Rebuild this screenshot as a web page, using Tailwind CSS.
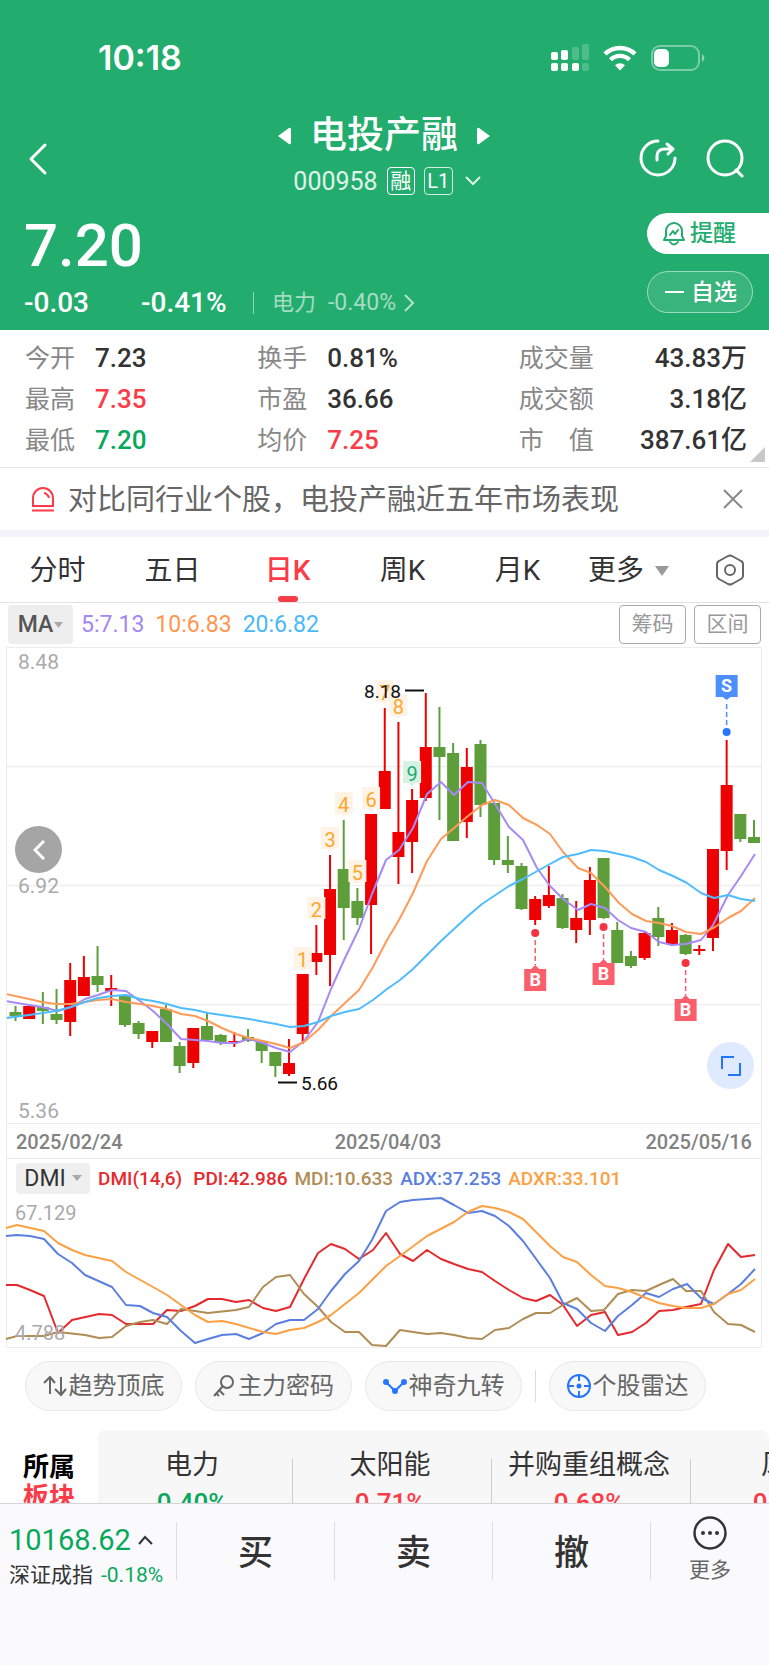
<!DOCTYPE html>
<html lang="zh-CN">
<head>
<meta charset="utf-8">
<meta name="viewport" content="width=device-width, initial-scale=1">
<title>电投产融 000958</title>
<script src="https://cdn.jsdelivr.net/npm/@tailwindcss/browser@4"></script>
</head>
<body class="bg-white font-['Roboto','Noto_Sans_CJK_SC',sans-serif] text-[#333]">
<div class="flex h-screen flex-col">

<header class="h-[330px] shrink-0 bg-[#22ac6e] text-white">
  <div class="flex h-[114px] items-center justify-between pl-[98px] pr-[64px] pt-px">
    <span class="font-['Inter',sans-serif] text-[34px] font-semibold leading-none">10:18</span>
    <div class="flex items-center gap-[14px]">
      <svg class="h-[28px] w-[38px]" viewBox="0 0 38 28" fill="#fff" aria-label="信号">
        <rect x="0" y="8" width="7" height="8" rx="2"/><rect x="10" y="6" width="7" height="10" rx="2"/>
        <rect x="21" y="3" width="7" height="13" rx="2" opacity=".2"/><rect x="31" y="0" width="7" height="16" rx="2" opacity=".2"/>
        <rect x="0" y="19" width="7" height="8" rx="2"/><rect x="10" y="19" width="7" height="8" rx="2"/><rect x="21" y="19" width="7" height="8" rx="2"/><rect x="31" y="19" width="7" height="8" rx="2" opacity=".2"/>
      </svg>
      <svg class="h-[26px] w-[34px]" viewBox="0 0 34 26" fill="none" stroke="#fff" aria-label="无线网络">
        <path d="M2 9A21.500 21.500 0 0 1 32 9" stroke-width="4.500"/><path d="M7.500 14.800A13.500 13.500 0 0 1 26.500 14.800" stroke-width="4.300"/>
        <path d="M17 25.500l-5-5.200a7.200 7.200 0 0 1 10 0z" fill="#fff" stroke="none"/>
      </svg>
      <svg class="h-[26px] w-[54px]" viewBox="0 0 54 26" aria-label="电池">
        <rect x="1" y="1" width="47" height="24" rx="8" fill="none" stroke="#fff" stroke-opacity=".4" stroke-width="2"/>
        <rect x="3" y="4" width="15" height="18" rx="5" fill="#fff"/><path d="M51 9q5 4 0 8z" fill="#fff" opacity=".5"/>
      </svg>
    </div>
  </div>

  <div class="flex h-[89px] justify-between pl-[24px] pr-[25px]">
    <button class="mt-[28px] h-[34px] w-[106px]" aria-label="返回">
      <svg class="h-[34px] w-[24px]" viewBox="0 0 24 34" fill="none" stroke="#fff" stroke-width="3" stroke-linecap="round" stroke-linejoin="round"><path d="M21 3L7 17l14 14"/></svg>
    </button>
    <div class="flex flex-col items-center">
      <div class="flex h-[44px] items-center gap-[19px]">
        <button aria-label="上一只"><svg class="h-[18px] w-[13px]" viewBox="0 0 13 18" fill="#fff"><path d="M0 9L11 1q2-1 2 1v14q0 2-2 1z"/></svg></button>
        <h1 class="text-[37px] font-medium leading-[44px]">电投产融</h1>
        <button aria-label="下一只"><svg class="h-[18px] w-[13px]" viewBox="0 0 13 18" fill="#fff"><path d="M13 9L2 1Q0 0 0 2v14q0 2 2 1z"/></svg></button>
      </div>
      <div class="mt-[8px] flex h-[30px] items-center gap-[9px] pl-[6px]">
        <span class="text-[25px] leading-none text-white/85">000958</span>
        <span class="flex h-[28px] w-[28px] items-center justify-center rounded-[4px] border border-white text-[21px] leading-none">融</span>
        <span class="flex h-[28px] w-[29px] items-center justify-center rounded-[4px] border border-white/80 text-[20px] leading-none">L1</span>
        <svg class="ml-[3px] h-[10px] w-[16px]" viewBox="0 0 16 10" fill="none" stroke="#fff" stroke-width="2" opacity=".85"><path d="M1 1l7 7 7-7"/></svg>
      </div>
    </div>
    <div class="mt-[24px] flex h-[40px] items-center gap-[28px]">
      <button aria-label="分享"><svg class="h-[40px] w-[40px]" viewBox="0 0 40 40" fill="none" stroke="#fff" stroke-width="3" stroke-linecap="round" stroke-linejoin="round"><path d="M20 3A17 17 0 1 0 37 20"/><path d="M19 22v-4q0-7 8-7h8M29 6l6 5-5 5"/></svg></button>
      <button aria-label="搜索"><svg class="h-[40px] w-[38px]" viewBox="0 0 38 40" fill="none" stroke="#fff" stroke-width="3" stroke-linecap="round"><circle cx="19" cy="20" r="17"/><path d="M30 32l6 6"/></svg></button>
    </div>
  </div>

  <div class="flex justify-between pl-[24px]">
    <div>
      <div class="mt-[10px] h-[66px] text-[60px] font-medium leading-[66px]">7.20</div>
      <div class="mt-[8px] flex h-[32px] items-center text-[28px] leading-[32px]">
        <span class="w-[117px] font-medium">-0.03</span>
        <span class="w-[112px] font-medium">-0.41%</span>
        <a href="#" class="flex items-center gap-[12px] border-l border-white/50 pl-[18px] text-[22px] leading-[22px] text-white/60"><span>电力</span><span class="text-[23px]">-0.40%</span>
          <svg class="-ml-[4px] h-[18px] w-[11px]" viewBox="0 0 11 18" fill="none" stroke="#fff" stroke-width="2" opacity=".65"><path d="M1 1l8 8-8 8"/></svg></a>
      </div>
    </div>
    <div class="mt-[10px] flex flex-col items-start gap-[17px]">
      <button class="flex h-[41px] w-[122px] items-center gap-[5px] rounded-l-full bg-white pl-[16px] text-[23px] font-medium leading-none text-[#22ac6e]">
        <svg class="h-[24px] w-[22px]" viewBox="0 0 22 24" fill="none" stroke="#22ac6e" stroke-width="2" stroke-linejoin="round" stroke-linecap="round"><path d="M1 18h20l-2-4V9a8 8 0 0 0-16 0v5zM7 20q4 5 8 0M7 13l3-4 2 3 3-4"/></svg>提醒</button>
      <button class="flex h-[42px] w-[106px] items-center gap-[7px] rounded-full border border-white/50 bg-white/10 pl-[17px] text-[23px] font-medium leading-none">
        <span class="h-[2px] w-[19px] bg-white"></span>自选</button>
    </div>
  </div>
</header>

<main class="min-h-0 flex-1 overflow-hidden">
  <section class="relative grid h-[138px] grid-cols-[232fr_261fr_228fr] border-b border-[#e8e8e8] pl-[25px] pr-[22px] pt-[8px] text-[26px] font-medium leading-[41px]">
    <dl class="grid grid-cols-[70px_1fr] content-start">
      <dt class="text-[25px] font-normal text-[#888]">今开</dt><dd>7.23</dd>
      <dt class="text-[25px] font-normal text-[#888]">最高</dt><dd class="text-[#fb3b47]">7.35</dd>
      <dt class="text-[25px] font-normal text-[#888]">最低</dt><dd class="text-[#08a85c]">7.20</dd>
    </dl>
    <dl class="grid grid-cols-[70px_1fr] content-start">
      <dt class="text-[25px] font-normal text-[#888]">换手</dt><dd>0.81%</dd>
      <dt class="text-[25px] font-normal text-[#888]">市盈</dt><dd>36.66</dd>
      <dt class="text-[25px] font-normal text-[#888]">均价</dt><dd class="text-[#fb3b47]">7.25</dd>
    </dl>
    <dl class="grid grid-cols-[75px_1fr] content-start">
      <dt class="text-[25px] font-normal text-[#888]">成交量</dt><dd class="text-right">43.83万</dd>
      <dt class="text-[25px] font-normal text-[#888]">成交额</dt><dd class="text-right">3.18亿</dd>
      <dt class="flex justify-between text-[25px] font-normal text-[#888]"><span>市</span><span>值</span></dt><dd class="text-right">387.61亿</dd>
    </dl>
    <svg class="absolute bottom-[5px] right-[4px] h-[15px] w-[15px]" viewBox="0 0 15 15" fill="#c8c8c8"><path d="M15 0v15H0z"/></svg>
  </section>

  <section class="flex h-[62px] items-center pl-[31px] pr-[26px]">
    <svg class="h-[25px] w-[24px]" viewBox="0 0 24 25" fill="none" stroke="#fb3b47" stroke-width="2"><path d="M2 19V11a10 10 0 0 1 20 0v8zM1 23.500h22M13 6q4 1 5 5"/></svg>
    <a href="#" class="ml-[13px] flex-1 whitespace-nowrap pt-[2px] text-[29px] leading-[40px] text-[#666]">对比同行业个股，电投产融近五年市场表现</a>
    <button aria-label="关闭"><svg class="h-[20px] w-[20px]" viewBox="0 0 20 20" fill="none" stroke="#888" stroke-width="2"><path d="M1 1l18 18M19 1L1 19"/></svg></button>
  </section>
  <div class="h-[7px] bg-[#f3f4f9]"></div>

  <nav class="flex h-[66px] items-stretch border-b border-[#e2e2e4] text-[28px] leading-[40px]">
    <button class="flex-1 pt-[2px]">分时</button>
    <button class="flex-1 pt-[2px]">五日</button>
    <button class="relative flex-1 pt-[2px] font-medium text-[#fb3b47]">日K<span class="absolute bottom-0 left-1/2 h-[6px] w-[20px] -translate-x-1/2 rounded-[3px] bg-[#fb3b47]"></span></button>
    <button class="flex-1 pt-[2px]">周K</button>
    <button class="flex-1 pt-[2px]">月K</button>
    <button class="flex flex-1 items-center justify-center pt-[2px]"><span class="flex items-center gap-[11px] pr-[8px]">更多<svg class="h-[10px] w-[14px]" viewBox="0 0 14 10" fill="#999"><path d="M0 0h14L7 10z"/></svg></span></button>
    <button class="flex w-[79px] items-center justify-center" aria-label="设置"><svg class="h-[32px] w-[30px]" viewBox="0 0 30 32" fill="none" stroke="#666" stroke-width="2" stroke-linejoin="round"><path d="M13 2q2-1 4 0l9 5q2 1 2 3v12q0 2-2 3l-9 5q-2 1-4 0l-9-5q-2-1-2-3V10q0-2 2-3z"/><circle cx="15" cy="16" r="5"/></svg></button>
  </nav>

  <div class="flex h-[44px] items-start justify-between pl-[8px] pr-[8px] pt-[2px]">
    <div class="flex h-[39px] items-center gap-[11px] text-[23px] leading-none">
      <button class="-mr-[3px] flex h-[39px] w-[65px] items-center justify-center gap-[1px] rounded-[4px] bg-[#eee] text-[23px] font-medium text-[#555]">MA<svg class="h-[6px] w-[9px]" viewBox="0 0 9 6" fill="#aaa"><path d="M0 0h9L4.500 6z"/></svg></button>
      <span class="text-[#a586f2]">5:7.13</span><span class="text-[#ff9650]">10:6.83</span><span class="text-[#48b8fb]">20:6.82</span>
    </div>
    <div class="flex gap-[8px] text-[21px] leading-none text-[#999]">
      <button class="h-[39px] w-[67px] rounded-[4px] border border-[#aaa]">筹码</button>
      <button class="h-[39px] w-[67px] rounded-[4px] border border-[#aaa]">区间</button>
    </div>
  </div>

  <section class="ml-[6px] mr-[7px] border border-[#ececec]">
    <div class="relative border-b border-[#ececec]">
      <svg id="kline" class="block w-full" viewBox="7 648 754 475" fill="none" role="img" aria-label="日K线图">
        <path d="M7 766.500H761M7 885.500H761M7 1004.500H761" stroke="#efefef" stroke-width="1.500"/>
        <g id="candles"></g>
        <g id="counts" font-size="20" text-anchor="middle"></g>
        <g stroke-width="2" stroke-linejoin="round">
          <polyline stroke="#a68af5" points="6,1001 29,1005 42,1007 58,1011 71,1007 85,999 98,995 112,990 126,991 140,1001 153,1011 167,1024 181,1039 195,1040 208,1041 222,1043 236,1043 249,1039 263,1043 276,1048 290,1052 304,1041 318,1022 331,989 345,958 359,929 372,894 386,860 399,850 413,828 427,794 441,782 454,795 468,782 482,783 495,804 509,827 523,840 537,868 550,886 563,899 578,910 591,904 605,908 618,920 631,928 646,932 659,942 672,945 686,944 701,940 713,925 728,895 741,876 755,854"/>
          <polyline stroke="#ff9b58" points="6,994 29,999 42,1002 56,1004 71,1004 85,1002 98,1000 112,999 126,1002 140,1004 153,1006 167,1009 181,1014 195,1016 208,1021 222,1028 236,1034 249,1038 263,1041 276,1044 290,1048 304,1042 318,1030 331,1016 345,1003 359,990 373,967 387,940 399,920 413,893 427,861 441,839 454,828 468,816 482,805 495,800 509,805 523,818 537,825 550,834 563,852 578,868 591,873 605,887 619,903 632,914 646,921 659,923 672,926 686,932 701,934 715,927 728,918 741,911 755,898"/>
          <polyline stroke="#4fbcff" points="6,1018 29,1015 56,1011 71,1007 85,1002 98,998 112,996 126,995 140,999 153,1001 167,1004 181,1008 195,1010 208,1013 249,1019 276,1024 290,1027 304,1026 318,1022 331,1016 345,1012 359,1009 373,1000 387,989 400,980 413,969 441,941 454,929 468,916 482,904 509,886 523,879 550,864 563,857 578,854 591,850 605,851 632,857 646,862 659,870 673,876 687,883 701,893 714,898 728,895 741,899 755,901"/>
        </g>
        <g font-size="21" fill="#aaa"><text x="18" y="669">8.48</text><text x="18" y="893">6.92</text><text x="18" y="1118">5.36</text></g>
        <g font-size="19" fill="#111"><text x="364" y="698">8.18</text><text x="301" y="1090">5.66</text></g>
        <path d="M405 690.500h19M278 1082.500h19" stroke="#111" stroke-width="2"/>
        <g id="trades" font-size="18" font-weight="700" text-anchor="middle"></g>
      </svg>
      <button class="absolute left-[8px] top-[178px] flex h-[47px] w-[47px] items-center justify-center rounded-full bg-[#a5a5a5]" aria-label="向左"><svg class="h-[20px] w-[12px]" viewBox="0 0 12 20" fill="none" stroke="#fff" stroke-width="3"><path d="M11 1L2 10l9 9"/></svg></button>
      <button class="absolute bottom-[34px] right-[7px] flex h-[47px] w-[47px] items-center justify-center rounded-full bg-[#dfeafe]" aria-label="全屏"><svg class="h-[22px] w-[22px]" viewBox="0 0 22 22" fill="none" stroke="#2575ff" stroke-width="2"><path d="M14 2H2v12M20 8v12H8"/></svg></button>
    </div>
    <div class="flex h-[35px] items-center justify-between border-b border-[#ececec] pl-[9px] pr-[9px] pt-[2px] text-[20px] font-medium leading-none text-[#828282]"><span>2025/02/24</span><span class="pl-[8px]">2025/04/03</span><span>2025/05/16</span></div>
    <div class="flex h-[38px] items-center gap-[7px] pl-[9px] text-[19px] font-medium leading-none">
      <button class="mr-px flex h-[31px] w-[74px] items-center justify-center gap-[6px] rounded-[4px] bg-[#efefef] text-[23px] font-normal">DMI<svg class="h-[6px] w-[10px]" viewBox="0 0 10 6" fill="#aaa"><path d="M0 0h10L5 6z"/></svg></button>
      <span class="mr-[4px] text-[#e5292d]">DMI(14,6)</span><span class="text-[#e5292d]">PDI:42.986</span><span class="text-[#b08d55]">MDI:10.633</span><span class="text-[#5b7fe0]">ADX:37.253</span><span class="text-[#fca044]">ADXR:33.101</span>
    </div>
    <svg class="block w-full overflow-visible" viewBox="7 1197 754 150" fill="none" role="img" aria-label="DMI指标">
      <g stroke-width="2" stroke-linejoin="round">
        <polyline stroke="#e5292d" points="6,1285 17,1285 30,1290 44,1296 58,1333 72,1320 99,1314 112,1315 126,1324 153,1324 167,1310 181,1311 195,1306 208,1299 222,1299 236,1302 249,1300 263,1308 276,1311 290,1307 304,1279 318,1253 331,1244 345,1249 359,1259 373,1250 386,1233 400,1254 413,1261 427,1250 441,1259 454,1264 468,1269 482,1272 495,1281 509,1290 523,1298 536,1301 550,1295 563,1305 577,1326 591,1315 605,1312 618,1335 632,1332 646,1323 659,1311 673,1310 686,1307 701,1304 714,1270 728,1244 741,1257 755,1255"/>
        <polyline stroke="#b08d55" points="6,1339 17,1336 44,1336 58,1332 85,1335 99,1338 112,1337 126,1326 140,1322 153,1320 167,1324 181,1309 195,1311 208,1313 236,1310 249,1307 263,1287 276,1277 290,1275 304,1294 318,1307 331,1322 345,1332 359,1332 372,1345 386,1346 400,1330 413,1332 427,1334 441,1333 454,1335 468,1338 482,1339 495,1330 509,1328 523,1319 536,1313 550,1313 563,1305 577,1298 591,1311 604,1310 618,1294 632,1290 646,1291 659,1285 673,1279 686,1291 701,1291 714,1312 728,1324 741,1325 755,1332"/>
        <polyline stroke="#5b7fe0" points="6,1236 17,1235 30,1236 44,1239 58,1254 72,1263 85,1275 112,1287 126,1305 140,1306 153,1313 167,1317 181,1331 195,1343 208,1339 222,1335 236,1334 249,1339 263,1333 276,1324 290,1320 304,1320 318,1309 331,1291 345,1274 359,1261 372,1240 386,1211 400,1202 413,1200 427,1199 441,1198 454,1205 468,1213 482,1211 495,1216 509,1226 523,1241 550,1278 563,1303 577,1309 591,1323 605,1331 618,1316 632,1305 646,1293 659,1297 673,1289 687,1284 701,1298 714,1304 728,1294 741,1284 755,1269"/>
        <polyline stroke="#fca044" points="6,1228 17,1225 44,1231 58,1243 72,1250 85,1255 112,1261 126,1272 153,1287 167,1295 181,1305 195,1315 208,1322 222,1321 236,1324 263,1332 276,1334 290,1330 304,1328 318,1322 331,1315 359,1293 372,1280 386,1266 400,1256 427,1236 454,1222 468,1212 482,1206 495,1208 509,1212 523,1219 550,1246 563,1257 577,1262 591,1275 605,1286 618,1288 632,1292 646,1298 659,1303 673,1306 686,1308 701,1308 714,1304 728,1294 741,1290 755,1279"/>
      </g>
      <g font-size="20" fill="#aaa"><text x="15" y="1220">67.129</text><text x="15" y="1340">4.788</text></g>
    </svg>
  </section>

  <div class="flex items-center gap-[13px] whitespace-nowrap pl-[25px] pt-[13px] text-[24px] leading-none text-[#666]">
    <button class="flex h-[50px] w-[157px] items-center justify-center gap-[2px] rounded-full border border-[#e8e8e8] bg-[#f8f8f8]"><svg class="h-[22px] w-[24px]" viewBox="0 0 24 22" fill="none" stroke="#666" stroke-width="2"><path d="M1 8l6-6 5 6M7 2v17M12 14l6 6 5-6M18 20V2"/></svg>趋势顶底</button>
    <button class="flex h-[50px] w-[157px] items-center justify-center gap-[3px] rounded-full border border-[#e8e8e8] bg-[#f8f8f8]"><svg class="h-[22px] w-[22px]" viewBox="0 0 22 22" fill="none" stroke="#666" stroke-width="2"><circle cx="14" cy="7" r="6"/><path d="M10 11L1 21M6 15l5 5M3 18l3 3"/></svg>主力密码</button>
    <button class="flex h-[50px] w-[157px] items-center justify-center gap-[2px] rounded-full border border-[#e8e8e8] bg-[#f8f8f8]"><svg class="h-[16px] w-[24px]" viewBox="0 0 24 16" fill="#2575ff" stroke="#2575ff" stroke-width="2"><path d="M3 4l9 9 9-9" fill="none"/><circle cx="3" cy="4" r="2"/><circle cx="21" cy="4" r="2"/><circle cx="12" cy="13" r="2"/></svg>神奇九转</button>
    <span class="h-[32px] w-px bg-[#ddd]"></span>
    <button class="flex h-[50px] w-[157px] items-center justify-center gap-[2px] rounded-full border border-[#e8e8e8] bg-[#f8f8f8]"><svg class="h-[24px] w-[24px]" viewBox="0 0 24 24" fill="none" stroke="#2575ff" stroke-width="2"><circle cx="12" cy="12" r="11"/><path d="M12 1v6M12 17v6M1 12h6M17 12h6"/><circle cx="12" cy="12" r="1.500" fill="#2575ff"/></svg>个股雷达</button>
  </div>

  <section class="mt-[19px] flex">
    <h2 class="w-[98px] shrink-0 pt-[22px] text-center text-[26px] font-bold leading-[30px] text-black">所属<br><span class="text-[#fb3b47]">板块</span></h2>
    <div class="flex h-[110px] min-w-0 flex-1 overflow-hidden rounded-t-[8px] bg-[#f7f7f8] text-center">
      <a href="#" class="w-[194px] shrink-0 pr-[6px]"><div class="mt-[15px] text-[27px] leading-[40px]">电力</div><div class="text-[26px] font-medium leading-[36px] text-[#08a85c]">0.40%</div></a>
      <span class="mt-[29px] w-px shrink-0 bg-[#ccc]"></span>
      <a href="#" class="w-[198px] shrink-0 pr-[4px]"><div class="mt-[15px] text-[27px] leading-[40px]">太阳能</div><div class="text-[26px] font-medium leading-[36px] text-[#fb3b47]">0.71%</div></a>
      <span class="mt-[29px] w-px shrink-0 bg-[#ccc]"></span>
      <a href="#" class="w-[198px] shrink-0 pr-[4px]"><div class="mt-[15px] text-[27px] leading-[40px]">并购重组概念</div><div class="text-[26px] font-medium leading-[36px] text-[#fb3b47]">0.68%</div></a>
      <span class="mt-[29px] w-px shrink-0 bg-[#ccc]"></span>
      <a href="#" class="w-[198px] shrink-0 pr-[4px]"><div class="mt-[15px] text-[27px] leading-[40px]">风电</div><div class="text-[26px] font-medium leading-[36px] text-[#fb3b47]">0.52%</div></a>
    </div>
  </section>
</main>

<footer class="h-[162px] shrink-0 border-t border-[#d5d5d8] bg-[#fafafd] pt-[18px]">
  <div class="flex h-[58px] items-center">
    <button class="w-[176px] shrink-0 pl-[9px] pt-[10px] text-left">
      <span class="flex items-center gap-[7px] text-[29px] leading-[32px] text-[#08a85c]">10168.62<svg class="h-[10px] w-[15px]" viewBox="0 0 15 10" fill="none" stroke="#333" stroke-width="2"><path d="M1 9l6-7 7 7"/></svg></span>
      <span class="mt-[5px] flex items-center gap-[8px] whitespace-nowrap text-[21px] leading-[28px]">深证成指<span class="text-[#08a85c]">-0.18%</span></span>
    </button>
    <button class="h-[58px] flex-1 border-l border-[#ddd] pt-[4px] text-[35px] font-medium leading-none">买</button>
    <button class="h-[58px] flex-1 border-l border-[#ddd] pt-[4px] text-[35px] font-medium leading-none">卖</button>
    <button class="h-[58px] flex-1 border-l border-[#ddd] pt-[4px] text-[35px] font-medium leading-none">撤</button>
    <button class="flex h-[58px] w-[119px] shrink-0 flex-col items-center justify-center gap-[6px] border-l border-[#ddd] pb-[2px] text-[21px] leading-[28px] text-[#666]"><svg class="h-[34px] w-[34px] shrink-0" viewBox="0 0 34 34" fill="none" stroke="#333" stroke-width="2.500"><circle cx="17" cy="17" r="15.500"/><g fill="#333" stroke="none"><circle cx="10" cy="17" r="2"/><circle cx="17" cy="17" r="2"/><circle cx="24" cy="17" r="2"/></g></svg>更多</button>
  </div>
</footer>
</div>

<script>
// Each candle: direction (1 up, 0 down), high, body top, body bottom, low
const candles = [
[0,1006,1012,1016,1021],[1,1006,1006,1019,1019],[0,992,1007,1011,1024],[0,989,1014,1020,1024],[1,963,980,1022,1036],
[1,956,977,996,996],[0,946,976,985,992],[1,975,988,991,1006],[0,994,995,1025,1027],[0,1021,1023,1034,1039],
[1,1031,1031,1042,1048],[0,1005,1009,1042,1042],[0,1042,1046,1066,1073],[1,1028,1028,1063,1068],[0,1013,1026,1040,1040],
[0,1034,1035,1043,1045],[1,1032,1041,1043,1047],[0,1029,1037,1041,1042],[0,1041,1042,1051,1063],[0,1052,1052,1066,1077],
[1,1039,1063,1074,1076],[1,974,974,1034,1044],[1,925,953,962,975],[1,855,889,955,986],[0,820,869,908,940],
[0,888,901,918,925],[1,814,814,905,954],[1,708,771,809,809],[1,722,832,857,884],[1,789,800,842,873],
[1,693,747,798,801],[0,707,747,757,820],[0,743,753,841,841],[1,748,767,822,838],[0,740,744,805,817],
[0,803,803,860,865],[0,836,860,865,873],[0,863,866,909,910],[1,896,899,920,925],[1,866,895,906,908],
[0,894,898,928,929],[1,901,918,930,943],[1,867,880,920,935],[0,858,858,918,919],[0,922,930,963,963],
[0,951,956,966,968],[1,931,933,958,960],[0,907,918,937,946],[1,923,930,944,946],[0,934,935,954,955],
[1,945,949,951,955],[1,849,849,938,951],[1,740,785,851,870],[0,814,814,839,842],[0,820,837,843,843]];
const xAt = i => 15.5 + i * 13.676;
document.getElementById('candles').innerHTML = candles.map(([up, h, t, b, l], i) => {
  const x = xAt(i), c = up ? '#ee0000' : '#5d9e3a';
  return `<path d="M${x} ${h}V${l}" stroke="${c}" stroke-width="2"/><rect x="${x - 6}" y="${t}" width="12" height="${b - t}" fill="${c}"/>`;
}).join('');
// Sequence counters above candles: candle index, centre y
document.getElementById('counts').innerHTML = [[21,958],[22,908],[23,838],[24,803],[25,871],[26,798],[27,691],[28,705],[29,772]].map(([i, y], n) => {
  const x = xAt(i), last = n === 8;
  return `<path d="M${x - 9} ${y - 11}h18v22h-6l-3 3-3-3h-6z" fill="${last ? '#d6f2e5' : '#fff3e6'}"/><text x="${x}" y="${y + 9}" fill="${last ? '#22ac6e' : '#fca62d'}">${n + 1}</text>`;
}).join('');
// Buy and sell markers: candle index, dot y, tag top y
document.getElementById('trades').innerHTML = [[38,933,969],[43,927,963],[49,963,999]].map(([i, d, t]) => {
  const x = xAt(i);
  return `<circle cx="${x}" cy="${d}" r="4" fill="#f7333f"/><path d="M${x} ${d + 7}V${t - 4}" stroke="#f85a68" stroke-width="1.500" stroke-dasharray="5 3"/><path d="M${x - 11} ${t}h7l4-4 4 4h7v22h-22z" fill="#fa5f6b"/><text x="${x}" y="${t + 17}" fill="#fff">B</text>`;
}).join('') + `<circle cx="${xAt(52)}" cy="732" r="4" fill="#2575ff"/><path d="M${xAt(52)} 704V728" stroke="#4d8fff" stroke-width="1.500" stroke-dasharray="5 3"/><path d="M${xAt(52) - 11} 675h22v22h-7l-4 3-4-3h-7z" fill="#4d8fff"/><text x="${xAt(52)}" y="692" fill="#fff">S</text>`;
</script>
</body>
</html>
